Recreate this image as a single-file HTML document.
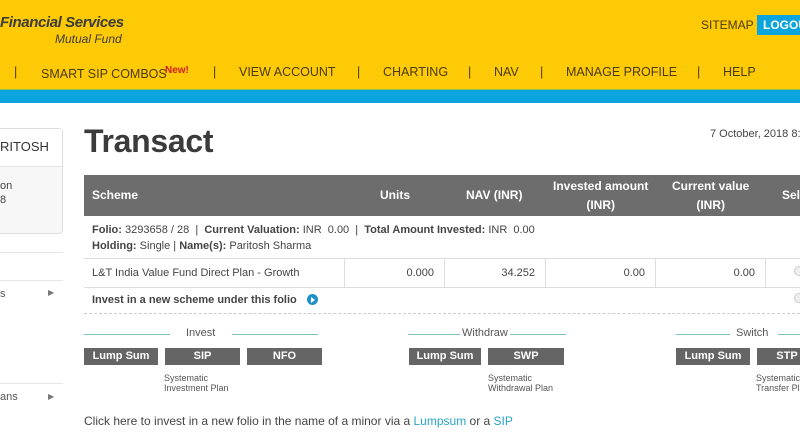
<!DOCTYPE html>
<html><head><meta charset="utf-8"><style>
*{margin:0;padding:0;box-sizing:border-box}
body{width:800px;height:435px;overflow:hidden;background:#fff;font-family:"Liberation Sans",Arial,sans-serif;position:relative;color:#444}
.a{position:absolute;white-space:nowrap}
.hdr{position:absolute;left:0;top:0;width:800px;height:90px;background:#fec905}
.blue{position:absolute;left:0;top:89px;width:800px;height:14px;background:#0aa5df;border-top:1px solid #8cbf5a}
.nav{font-size:12.5px;color:#4a3b10;top:65px}
.th{color:#fff;font-weight:bold;font-size:12px;text-align:center;line-height:19px}
.cell{position:absolute;top:259px;height:28px;border-right:1px solid #ddd;font-size:11px;line-height:28px;text-align:right;padding-right:10px;color:#444}
.btn{position:absolute;top:348px;height:17px;background:#656565;color:#fff;font-weight:bold;font-size:11px;text-align:center;line-height:17px}
.ln{position:absolute;top:334px;height:1px;background:#7ec4bc}
.lbl{position:absolute;top:327px;font-size:11px;color:#555}
.desc{position:absolute;top:373px;font-size:9px;line-height:10px;color:#555;white-space:nowrap}
</style></head><body>
<div class="hdr"></div>
<div class="a" style="left:0;top:14px;font-size:15px;font-weight:bold;font-style:italic;color:#3c3c3c;letter-spacing:-0.4px">Financial Services</div>
<div class="a" style="left:55px;top:32px;font-size:12px;font-style:italic;color:#3c3c3c">Mutual Fund</div>
<div class="a" style="left:701px;top:18px;font-size:12px;color:#4a3b10">SITEMAP</div>
<div class="a" style="left:757px;top:15px;width:50px;height:20px;background:#0aa5df;color:#fff;font-weight:bold;font-size:12px;line-height:20px;padding-left:6px">LOGOUT</div>
<div class="a nav" style="left:14px">|</div>
<div class="a nav" style="left:41px;top:67px">SMART SIP COMBOS</div>
<div class="a" style="left:165px;top:65px;font-size:10px;font-weight:bold;color:#d21f1f">New!</div>
<div class="a nav" style="left:213px">|</div>
<div class="a nav" style="left:239px">VIEW ACCOUNT</div>
<div class="a nav" style="left:357px">|</div>
<div class="a nav" style="left:383px">CHARTING</div>
<div class="a nav" style="left:468px">|</div>
<div class="a nav" style="left:494px">NAV</div>
<div class="a nav" style="left:540px">|</div>
<div class="a nav" style="left:566px">MANAGE PROFILE</div>
<div class="a nav" style="left:697px">|</div>
<div class="a nav" style="left:723px">HELP</div>
<div class="blue"></div>

<div class="a" style="left:-10px;top:128px;width:73px;height:106px;border:1px solid #ddd;border-radius:4px;background:#f7f7f7"></div>
<div class="a" style="left:-10px;top:129px;width:72px;height:38px;background:#fff;border-bottom:1px solid #e3e3e3"></div>
<div class="a" style="left:0;top:139px;font-size:13px;color:#333">RITOSH</div>
<div class="a" style="left:0;top:179px;font-size:11px;color:#444;line-height:14px">on<br>8</div>
<div class="a" style="left:0;top:252px;width:63px;height:1px;background:#e5e5e5"></div>
<div class="a" style="left:0;top:280px;width:63px;height:1px;background:#e5e5e5"></div>
<div class="a" style="left:0;top:288px;font-size:11px;color:#555">s</div>
<div class="a" style="left:48px;top:288px;font-size:8px;color:#777">▶</div>
<div class="a" style="left:0;top:383px;width:63px;height:1px;background:#e5e5e5"></div>
<div class="a" style="left:0;top:391px;font-size:11px;color:#555">ans</div>
<div class="a" style="left:48px;top:392px;font-size:8px;color:#777">▶</div>

<div class="a" style="left:84px;top:123px;font-size:32px;font-weight:bold;color:#3b3b3b;letter-spacing:-0.3px">Transact</div>
<div class="a" style="left:710px;top:128px;font-size:11px;color:#444">7 October, 2018 8:41</div>

<div class="a" style="left:84px;top:175px;width:716px;height:41px;background:#6d6d6d"></div>
<div class="a th" style="left:92px;top:186px">Scheme</div>
<div class="a th" style="left:380px;top:186px">Units</div>
<div class="a th" style="left:466px;top:186px">NAV (INR)</div>
<div class="a th" style="left:553px;top:177px">Invested amount<br>(INR)</div>
<div class="a th" style="left:672px;top:177px">Current value<br>(INR)</div>
<div class="a th" style="left:782px;top:186px">Select</div>

<div class="a" style="left:92px;top:222px;font-size:11px;color:#444;line-height:16px"><b>Folio:</b> 3293658 / 28 &nbsp;| &nbsp;<b>Current Valuation:</b> INR &nbsp;0.00 &nbsp;| &nbsp;<b>Total Amount Invested:</b> INR &nbsp;0.00<br><b>Holding:</b> Single | <b>Name(s):</b> Paritosh Sharma</div>
<div class="a" style="left:84px;top:258px;width:716px;height:1px;background:#ddd"></div>
<div class="a" style="left:84px;top:287px;width:716px;height:1px;background:#ddd"></div>
<div class="cell" style="left:84px;width:261px;text-align:left;padding-left:8px">L&amp;T India Value Fund Direct Plan - Growth</div>
<div class="cell" style="left:345px;width:100px">0.000</div>
<div class="cell" style="left:445px;width:101px">34.252</div>
<div class="cell" style="left:546px;width:110px">0.00</div>
<div class="cell" style="left:656px;width:110px">0.00</div>
<div class="a" style="left:794px;top:266px;width:10px;height:10px;border-radius:50%;border:1px solid #ccc;background:#eee"></div>
<div class="a" style="left:92px;top:294px;font-size:11px;font-weight:bold;color:#444">Invest in a new scheme under this folio</div>
<div class="a" style="left:307px;top:294px;width:11px;height:11px;border-radius:50%;background:#1e90c8"></div>
<div class="a" style="left:311px;top:297px;width:0;height:0;border-left:4px solid #fff;border-top:3px solid transparent;border-bottom:3px solid transparent"></div>
<div class="a" style="left:794px;top:293px;width:10px;height:10px;border-radius:50%;border:1px solid #ccc;background:#eee"></div>
<div class="a" style="left:84px;top:313px;width:716px;border-top:1px dashed #ccc"></div>

<div class="ln" style="left:84px;width:86px"></div><div class="lbl" style="left:186px">Invest</div><div class="ln" style="left:232px;width:86px"></div>
<div class="ln" style="left:408px;width:52px"></div><div class="lbl" style="left:462px">Withdraw</div><div class="ln" style="left:510px;width:56px"></div>
<div class="ln" style="left:676px;width:54px"></div><div class="lbl" style="left:736px">Switch</div><div class="ln" style="left:778px;width:30px"></div>

<div class="btn" style="left:84px;width:74px">Lump Sum</div>
<div class="btn" style="left:165px;width:75px">SIP</div>
<div class="btn" style="left:247px;width:75px">NFO</div>
<div class="btn" style="left:409px;width:72px">Lump Sum</div>
<div class="btn" style="left:488px;width:76px">SWP</div>
<div class="btn" style="left:676px;width:74px">Lump Sum</div>
<div class="btn" style="left:757px;width:60px">STP</div>
<div class="desc" style="left:164px">Systematic<br>Investment Plan</div>
<div class="desc" style="left:488px">Systematic<br>Withdrawal Plan</div>
<div class="desc" style="left:756px">Systematic<br>Transfer Plan</div>

<div class="a" style="left:84px;top:414px;font-size:12px;color:#444">Click here to invest in a new folio in the name of a minor via a <span style="color:#29a3c9">Lumpsum</span> or a <span style="color:#29a3c9">SIP</span></div>
</body></html>
